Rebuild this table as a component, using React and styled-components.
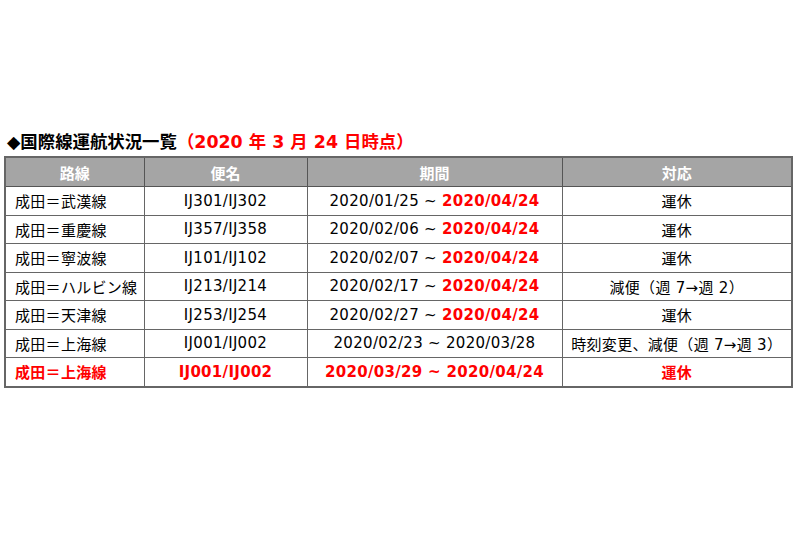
import React from "react";
import styled, { createGlobalStyle } from "styled-components";

const GlobalStyle = createGlobalStyle`
  html, body {
    margin: 0;
    padding: 0;
    background: #ffffff;
  }
  body {
    font-family: "DejaVu Sans", "Noto Sans CJK JP", sans-serif;
  }
`;

const red = "#ff0000";

const rows = [
  { route: "成田＝武漢線", flight: "IJ301/IJ302", from: "2020/01/25", to: "2020/04/24", toRed: true, action: "運休" },
  { route: "成田＝重慶線", flight: "IJ357/IJ358", from: "2020/02/06", to: "2020/04/24", toRed: true, action: "運休" },
  { route: "成田＝寧波線", flight: "IJ101/IJ102", from: "2020/02/07", to: "2020/04/24", toRed: true, action: "運休" },
  { route: "成田＝ハルビン線", flight: "IJ213/IJ214", from: "2020/02/17", to: "2020/04/24", toRed: true, action: "減便（週 7→週 2）" },
  { route: "成田＝天津線", flight: "IJ253/IJ254", from: "2020/02/27", to: "2020/04/24", toRed: true, action: "運休" },
  { route: "成田＝上海線", flight: "IJ001/IJ002", from: "2020/02/23", to: "2020/03/28", toRed: false, action: "時刻変更、減便（週 7→週 3）" },
  { route: "成田＝上海線", flight: "IJ001/IJ002", from: "2020/03/29", to: "2020/04/24", toRed: true, action: "運休", highlight: true },
];

const App = () => {
  return (
    <>
      <GlobalStyle />
      <Page>
        <Title>
          ◆国際線運航状況一覧<Note>（2020 年 3 月 24 日時点）</Note>
        </Title>
        <Table>
          <colgroup>
            <col style={{ width: 139 }} />
            <col style={{ width: 163 }} />
            <col style={{ width: 255 }} />
            <col />
          </colgroup>
          <thead>
            <tr>
              <Th>路線</Th>
              <Th>便名</Th>
              <Th>期間</Th>
              <Th>対応</Th>
            </tr>
          </thead>
          <tbody>
            {rows.map((r, i) => (
              <tr key={i}>
                <Td $left $hl={r.highlight}>{r.route}</Td>
                <Td $hl={r.highlight}>{r.flight}</Td>
                <Td $hl={r.highlight}>
                  {r.from} ~ {r.toRed ? <Red>{r.to}</Red> : r.to}
                </Td>
                <Td $hl={r.highlight}>{r.action}</Td>
              </tr>
            ))}
          </tbody>
        </Table>
      </Page>
    </>
  );
};

const Page = styled.div`
  width: 800px;
  height: 533px;
  padding: 131px 7px 0 4px;
  box-sizing: border-box;
`;

const Title = styled.h2`
  margin: 0 0 3px 3px;
  font-size: 17.4px;
  line-height: 22px;
  font-weight: 700;
  color: #000000;
  white-space: nowrap;
`;

const Note = styled.span`
  color: ${red};
`;

const Table = styled.table`
  width: 789px;
  border-collapse: collapse;
  table-layout: fixed;
  border: 2px solid #666666;
`;

const Th = styled.th`
  height: 28px;
  padding: 0;
  background: #a5a5a5;
  color: #ffffff;
  font-size: 15px;
  font-weight: 700;
  text-align: center;
  border: 1.5px solid #555555;
`;

const Td = styled.td`
  height: 27.5px;
  padding: 0;
  padding-left: ${(p) => (p.$left ? "9px" : "0")};
  font-size: 15px;
  letter-spacing: 0.3px;
  font-weight: ${(p) => (p.$hl ? 700 : 400)};
  color: ${(p) => (p.$hl ? red : "#000000")};
  text-align: ${(p) => (p.$left ? "left" : "center")};
  white-space: nowrap;
  border: 1.5px solid #666666;
`;

const Red = styled.span`
  color: ${red};
  font-weight: 700;
`;

export default App;
